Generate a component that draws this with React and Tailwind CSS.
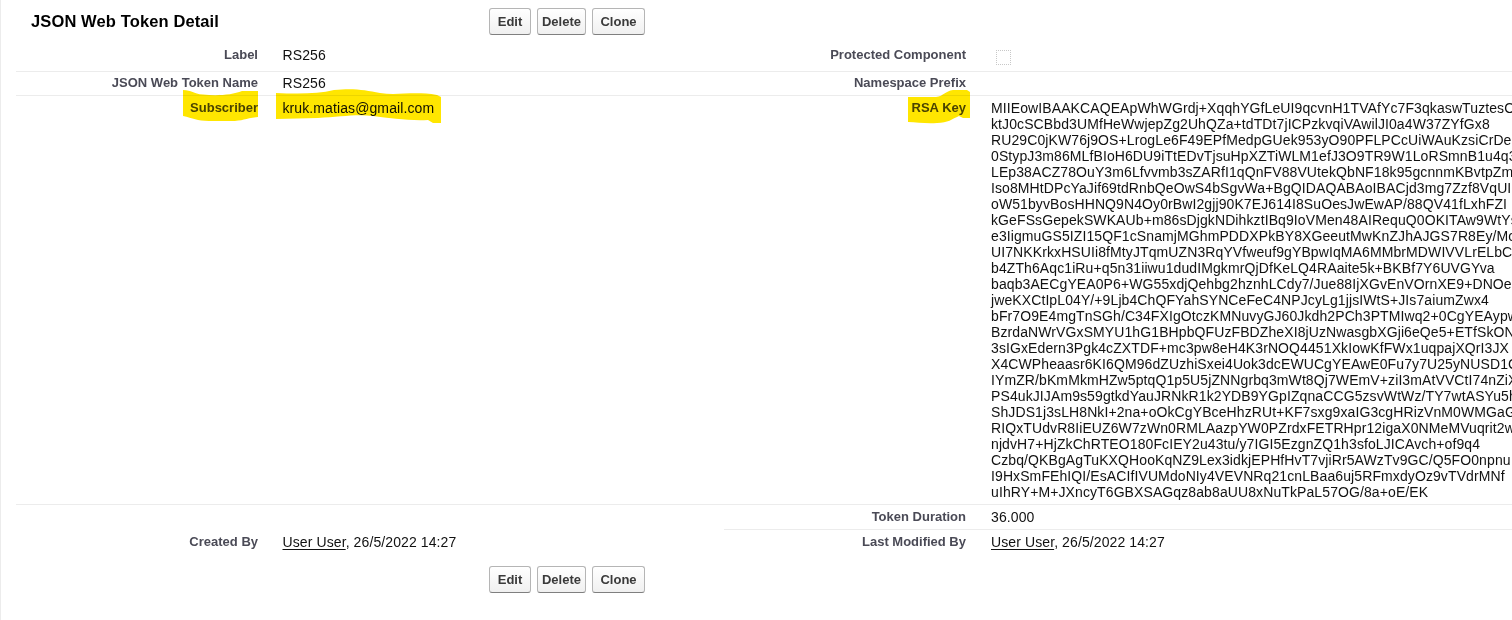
const KEY_LINES = [
  "MIIEowIBAAKCAQEApWhWGrdj+XqqhYGfLeUI9qcvnH1TVAfYc7F3qkaswTuztesO",
  "ktJ0cSCBbd3UMfHeWwjepZg2UhQZa+tdTDt7jICPzkvqiVAwilJI0a4W37ZYfGx8",
  "RU29C0jKW76j9OS+LrogLe6F49EPfMedpGUek953yO90PFLPCcUiWAuKzsiCrDe",
  "0StypJ3m86MLfBIoH6DU9iTtEDvTjsuHpXZTiWLM1efJ3O9TR9W1LoRSmnB1u4q3",
  "LEp38ACZ78OuY3m6Lfvvmb3sZARfI1qQnFV88VUtekQbNF18k95gcnnmKBvtpZm",
  "Iso8MHtDPcYaJif69tdRnbQeOwS4bSgvWa+BgQIDAQABAoIBACjd3mg7Zzf8VqUI",
  "oW51byvBosHHNQ9N4Oy0rBwI2gjj90K7EJ614I8SuOesJwEwAP/88QV41fLxhFZI",
  "kGeFSsGepekSWKAUb+m86sDjgkNDihkztIBq9IoVMen48AIRequQ0OKITAw9WtYs",
  "e3IigmuGS5IZI15QF1cSnamjMGhmPDDXPkBY8XGeeutMwKnZJhAJGS7R8Ey/Mo",
  "UI7NKKrkxHSUIi8fMtyJTqmUZN3RqYVfweuf9gYBpwIqMA6MMbrMDWIVVLrELbC9",
  "b4ZTh6Aqc1iRu+q5n31iiwu1dudIMgkmrQjDfKeLQ4RAaite5k+BKBf7Y6UVGYva",
  "baqb3AECgYEA0P6+WG55xdjQehbg2hznhLCdy7/Jue88IjXGvEnVOrnXE9+DNOe",
  "jweKXCtIpL04Y/+9Ljb4ChQFYahSYNCeFeC4NPJcyLg1jjsIWtS+JIs7aiumZwx4",
  "bFr7O9E4mgTnSGh/C34FXIgOtczKMNuvyGJ60Jkdh2PCh3PTMIwq2+0CgYEAypw",
  "BzrdaNWrVGxSMYU1hG1BHpbQFUzFBDZheXI8jUzNwasgbXGji6eQe5+ETfSkON",
  "3sIGxEdern3Pgk4cZXTDF+mc3pw8eH4K3rNOQ4451XkIowKfFWx1uqpajXQrI3JX",
  "X4CWPheaasr6KI6QM96dZUzhiSxei4Uok3dcEWUCgYEAwE0Fu7y7U25yNUSD1G",
  "IYmZR/bKmMkmHZw5ptqQ1p5U5jZNNgrbq3mWt8Qj7WEmV+ziI3mAtVVCtI74nZiX",
  "PS4ukJIJAm9s59gtkdYauJRNkR1k2YDB9YGpIZqnaCCG5zsvWtWz/TY7wtASYu5h",
  "ShJDS1j3sLH8NkI+2na+oOkCgYBceHhzRUt+KF7sxg9xaIG3cgHRizVnM0WMGaG",
  "RIQxTUdvR8IiEUZ6W7zWn0RMLAazpYW0PZrdxFETRHpr12igaX0NMeMVuqrit2w",
  "njdvH7+HjZkChRTEO180FcIEY2u43tu/y7IGI5EzgnZQ1h3sfoLJICAvch+of9q4",
  "Czbq/QKBgAgTuKXQHooKqNZ9Lex3idkjEPHfHvT7vjiRr5AWzTv9GC/Q5FO0npnu",
  "I9HxSmFEhIQI/EsACIfIVUMdoNIy4VEVNRq21cnLBaa6uj5RFmxdyOz9vTVdrMNf",
  "uIhRY+M+JXncyT6GBXSAGqz8ab8aUU8xNuTkPaL57OG/8a+oE/EK",
];

const BUTTONS = [
  { text: "Edit", width: "w-[42px]" },
  { text: "Delete", width: "w-[49px]" },
  { text: "Clone", width: "w-[53px]" },
];

function Buttons() {
  return (
    <div className="flex gap-1.5">
      {BUTTONS.map(({ text, width }) => (
        <button
          key={text}
          className={`${width} h-[27px] whitespace-nowrap rounded-[3px] border border-[#b5b5b5] border-b-[#7f7f7f] bg-linear-to-b from-white to-[#f0f0f0] text-center text-[13px] leading-[25px] font-bold text-[#3a3a3a]`}
        >
          {text}
        </button>
      ))}
    </div>
  );
}

function Mark({ className, viewBox, d }) {
  return (
    <svg className={`pointer-events-none absolute mix-blend-multiply ${className}`} viewBox={viewBox} aria-hidden="true">
      <path d={d} fill="#ffe600" />
    </svg>
  );
}

function Field({ label, children, side = "left", mark }) {
  return (
    <div className={side === "left" ? "flex w-[708px] shrink-0" : "flex min-w-0 flex-1"}>
      <div className="w-[242px] shrink-0 pt-1 text-right text-[13px] leading-4 font-bold text-[#4a4a56]">
        <span className="relative">
          {label}
          {mark}
        </span>
      </div>
      <div
        className={`${side === "left" ? "pl-[24.5px]" : "pl-[25px]"} min-w-0 flex-1 pt-1 tracking-[0.1px] whitespace-nowrap`}
      >
        {children}
      </div>
    </div>
  );
}

function Stamp() {
  return (
    <>
      <a className="underline underline-offset-2">User User</a>, 26/5/2022 14:27
    </>
  );
}

export default function App() {
  return (
    <main className="isolate h-[620px] w-full overflow-hidden border-l border-[#ececec] bg-white pl-[15px] font-['Liberation_Sans',Arial,sans-serif] text-[14px] leading-4 text-[#111]">
      <header className="flex h-[43px] pt-2 pl-[15px]">
        <h2 className="w-[458px] pt-1 text-[16.5px] leading-[19px] font-bold tracking-[0.12px] text-black">
          JSON Web Token Detail
        </h2>
        <Buttons />
      </header>

      <div className="flex h-[29px] border-b border-[#ececec]">
        <Field label="Label">RS256</Field>
        <Field label="Protected Component" side="right">
          <div className="mt-[3px] ml-[5px] size-[15px] border border-dotted border-[#c8c8c8]" />
        </Field>
      </div>
      <div className="flex h-6 border-b border-[#ececec]">
        <div className="-mt-px flex flex-1">
          <Field label="JSON Web Token Name">RS256</Field>
          <Field label="Namespace Prefix" side="right" />
        </div>
      </div>
      <div className="flex h-[409px] border-b border-[#ececec]">
        <Field
          label="Subscriber"
          mark={
            <Mark
              className="-top-[10px] right-0 h-[31px] w-[75px]"
              viewBox="0 0 75 31"
              d="M0 0C9 0 10 4 20 4.5C34 6 49 5 59 1L75 1V27C63 28 60 31 48 31H26C14 31 10 28 0 26Z"
            />
          }
        >
          <span className="relative">
            kruk.matias@gmail.com
            <Mark
              className="-top-[11px] -left-[6.5px] h-[34px] w-[166px]"
              viewBox="0 0 166 34"
              d="M0 4C22 5 42 5 58 1C78-1 89 1 104 4C121 7 137 2 161 6L165 8V34H157L152 31C133 32 114 29 97 27C79 25 64 28 42 29L0 30Z"
            />
          </span>
        </Field>
        <Field
          label="RSA Key"
          side="right"
          mark={
            <Mark
              className="-top-[10px] -right-[5px] h-[34px] w-[63px]"
              viewBox="0 0 63 34"
              d="M0 7H28C36 6 37 1 45 0H59L62 2V28H55L51 26C44 29 40 33 29 33C18 34 9 32 0 32Z"
            />
          }
        >
          {KEY_LINES.map((line) => (
            <div key={line}>{line}</div>
          ))}
        </Field>
      </div>
      <div className="flex h-[25px]">
        <div className="w-[708px] shrink-0" />
        <div className="flex flex-1 border-b border-[#ececec]">
          <Field label="Token Duration" side="right">36.000</Field>
        </div>
      </div>
      <div className="flex h-9">
        <Field label="Created By"><Stamp /></Field>
        <Field label="Last Modified By" side="right"><Stamp /></Field>
      </div>
      <footer className="pl-[473px]">
        <Buttons />
      </footer>
    </main>
  );
}
